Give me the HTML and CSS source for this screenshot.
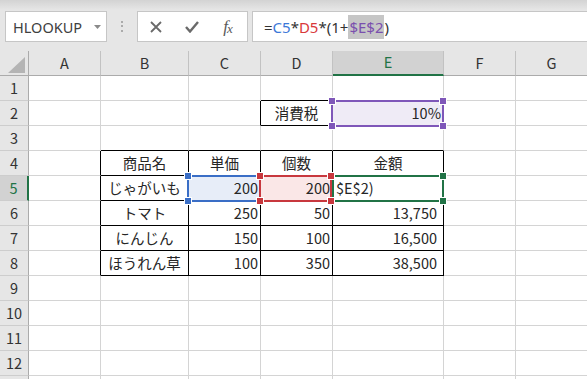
FILE: index.html
```html
<!DOCTYPE html>
<html lang="ja">
<head>
<meta charset="utf-8">
<title>Excel</title>
<link rel="stylesheet" href="styles.css">
</head>
<body>
<div class="toolbar">
  <div class="namebox">
    <span>HLOOKUP</span>
    <svg class="caret" width="7" height="4" viewBox="0 0 7 4"><polygon points="0,0 7,0 3.5,4" fill="#8a8a8a"/></svg>
  </div>
  <div class="grip"><div class="dots"></div></div>
  <div class="fbuttons">
    <div class="fb"><svg width="12" height="12" viewBox="0 0 12 12"><path d="M1 1 L11 11 M11 1 L1 11" stroke="#6a6a6a" stroke-width="1.8" fill="none"/></svg></div>
    <div class="fb"><svg width="14" height="12" viewBox="0 0 14 12"><path d="M1 6 L5 10.5 L13 1" stroke="#6a6a6a" stroke-width="2.4" fill="none"/></svg></div>
    <div class="fb fx"><span class="f">f</span><span class="x">x</span></div>
  </div>
  <div class="formula">
    <span class="ftext"><span class="k">=</span><span class="rb">C5</span><span class="k">*</span><span class="rr">D5</span><span class="k">*(1+</span><span class="hl">$E$2</span><span class="k">)</span></span>
  </div>
</div>

<div class="sheet">
  <!-- header -->
  <div class="corner"><svg width="28" height="24" viewBox="0 0 28 24"><polygon points="8,22 25,22 25,6" fill="#b4b4b4"/></svg></div>
  <div class="c ch">A</div><div class="c ch">B</div><div class="c ch">C</div><div class="c ch">D</div><div class="c ch sel">E</div><div class="c ch">F</div><div class="c ch">G</div>

  <!-- 1 -->
  <div class="c rh">1</div><div class="c"></div><div class="c"></div><div class="c"></div><div class="c bb"></div><div class="c"></div><div class="c"></div><div class="c"></div>
  <!-- 2 -->
  <div class="c rh">2</div><div class="c"></div><div class="c"></div><div class="c br"></div><div class="c br bb ctr">消費税</div><div class="c num f-purple">10%</div><div class="c"></div><div class="c"></div>
  <!-- 3 -->
  <div class="c rh">3</div><div class="c"></div><div class="c bb"></div><div class="c bb"></div><div class="c bb"></div><div class="c bb"></div><div class="c"></div><div class="c"></div>
  <!-- 4 -->
  <div class="c rh">4</div><div class="c br"></div><div class="c br bb ctr">商品名</div><div class="c br bb ctr">単価</div><div class="c br bb ctr">個数</div><div class="c br bb ctr">金額</div><div class="c"></div><div class="c"></div>
  <!-- 5 -->
  <div class="c rh sel">5</div><div class="c br"></div><div class="c br bb ctr">じゃがいも</div><div class="c br bb num f-blue">200</div><div class="c br bb num f-red">200</div><div class="c br bb edit">$E$2)</div><div class="c"></div><div class="c"></div>
  <!-- 6 -->
  <div class="c rh">6</div><div class="c br"></div><div class="c br bb ctr">トマト</div><div class="c br bb num">250</div><div class="c br bb num">50</div><div class="c br bb num pad">13,750</div><div class="c"></div><div class="c"></div>
  <!-- 7 -->
  <div class="c rh">7</div><div class="c br"></div><div class="c br bb ctr">にんじん</div><div class="c br bb num">150</div><div class="c br bb num">100</div><div class="c br bb num pad">16,500</div><div class="c"></div><div class="c"></div>
  <!-- 8 -->
  <div class="c rh">8</div><div class="c br"></div><div class="c br bb ctr">ほうれん草</div><div class="c br bb num">100</div><div class="c br bb num">350</div><div class="c br bb num pad">38,500</div><div class="c"></div><div class="c"></div>
  <!-- 9-12 -->
  <div class="c rh">9</div><div class="c"></div><div class="c"></div><div class="c"></div><div class="c"></div><div class="c"></div><div class="c"></div><div class="c"></div>
  <div class="c rh">10</div><div class="c"></div><div class="c"></div><div class="c"></div><div class="c"></div><div class="c"></div><div class="c"></div><div class="c"></div>
  <div class="c rh">11</div><div class="c"></div><div class="c"></div><div class="c"></div><div class="c"></div><div class="c"></div><div class="c"></div><div class="c"></div>
  <div class="c rh">12</div><div class="c"></div><div class="c"></div><div class="c"></div><div class="c"></div><div class="c"></div><div class="c"></div><div class="c"></div>
  <!-- sliver of next row -->
  <div class="c rh edge"></div><div class="c edge"></div><div class="c edge"></div><div class="c edge"></div><div class="c edge"></div><div class="c edge"></div><div class="c edge"></div><div class="c edge"></div>

  <!-- reference highlights (overlays) -->
  <div class="ref ref-e2"><i class="h tl"></i><i class="h tr"></i><i class="h bl"></i><i class="h brc"></i></div>
  <div class="ref ref-c5"><i class="h tl"></i><i class="h tr"></i><i class="h bl"></i><i class="h brc"></i></div>
  <div class="ref ref-d5"><i class="h tl"></i><i class="h tr"></i><i class="h bl"></i><i class="h brc"></i></div>
  <div class="ref ref-e5"><i class="h tr"></i><i class="h brc"></i></div>
</div>
</body>
</html>
```

FILE: styles.css
```css
* { box-sizing: border-box; }

body {
  margin: 0;
  width: 587px;
  height: 379px;
  overflow: hidden;
  background: #ffffff;
  font-family: "Noto Sans CJK JP", "Noto Sans", sans-serif;
}

/* ---------- toolbar ---------- */
.toolbar {
  height: 51px;
  display: flex;
  align-items: flex-start;
  padding-top: 11px;
  background: linear-gradient(#d3d3d3 0, #e6e6e6 10px, #e6e6e6 100%);
}

.namebox {
  margin-left: 5px;
  width: 102px;
  height: 31px;
  background: #fff;
  border: 1px solid #c6c6c6;
  display: flex;
  align-items: center;
  padding-left: 7px;
  font-family: "Noto Sans", sans-serif;
  font-size: 14.5px;
  color: #404040;
}

.caret {
  margin-left: auto;
  margin-right: 5px;
}

.grip {
  width: 30px;
  height: 31px;
  display: flex;
  justify-content: center;
  align-items: center;
}

.dots {
  width: 2px;
  height: 11px;
  background: repeating-linear-gradient(#ababab 0 2px, transparent 2px 4.5px);
}

.fbuttons {
  width: 111px;
  height: 31px;
  border: 1px solid #c6c6c6;
  background: #fff;
  display: flex;
  align-items: center;
}

.fb {
  width: 36px;
  display: flex;
  justify-content: center;
  align-items: center;
}

.fx {
  font-family: "Liberation Serif", serif;
  font-style: italic;
  color: #5a5a5a;
  font-size: 17px;
  line-height: 1;
}

.fx .x {
  font-size: 13px;
  margin-top: 4px;
  margin-left: -1px;
}

.formula {
  flex: 1;
  margin-left: 4px;
  height: 31px;
  border: 1px solid #c6c6c6;
  border-right: none;
  background: #fff;
  display: flex;
  align-items: center;
  padding-left: 11px;
  font-family: "Noto Sans", sans-serif;
  font-size: 15px;
  color: #333;
}

.ftext { line-height: 24px; }
.k { color: #333; }
.rb { color: #3c78d8; }
.rr { color: #d9383a; }
.hl {
  display: inline-block;
  background: #c6c6c6;
  color: #7a4fae;
  line-height: 24px;
  height: 24px;
  padding: 0 1px;
}

/* ---------- sheet ---------- */
.sheet {
  position: relative;
  display: grid;
  grid-template-columns: 29px 72px 88px 72px 72px 111px 72px 72px;
  grid-template-rows: repeat(13, 25px) 3px;
}

.c {
  border-right: 1px solid #d4d4d4;
  border-bottom: 1px solid #d4d4d4;
  display: flex;
  align-items: center;
  padding: 0 2px;
  font-size: 14.5px;
  line-height: 1;
  color: #262626;
  white-space: nowrap;
  overflow: hidden;
}

.edge { border-bottom: none; }

.corner {
  background: #e6e6e6;
  border-right: 1px solid #ababab;
  border-bottom: 1px solid #ababab;
}
.corner svg { display: block; }

.ch {
  background: #e6e6e6;
  border-right-color: #c2c2c2;
  border-bottom-color: #ababab;
  justify-content: center;
  color: #333;
}

.rh {
  background: #e6e6e6;
  border-right-color: #ababab;
  border-bottom-color: #cdcdcd;
  justify-content: center;
  color: #333;
  padding: 0;
}

.ch.sel {
  background: #d2d2d2;
  color: #217346;
  border-bottom: 2px solid #217346;
}

.rh.sel {
  background: #d2d2d2;
  color: #217346;
  border-right: 2px solid #217346;
}

.ctr { justify-content: center; }
.num { justify-content: flex-end; }
.pad { padding-right: 6px; }
.edit { padding-left: 3px; }

.br { border-right-color: #000; }
.bb { border-bottom-color: #000; }

.f-purple { background: #efebf6; }
.f-blue { background: #e7edf8; }
.f-red { background: #fae7e7; }

/* ---------- reference highlight overlays ---------- */
.ref {
  position: absolute;
  border: 2px solid currentColor;
}

.ref-e2 { color: #7f57b9; left: 331px; top: 49px; width: 113px; height: 27px; }
.ref-c5 { color: #3a6ec6; left: 187px; top: 124px; width: 74px; height: 27px; }
.ref-d5 { color: #c8383e; left: 259px; top: 124px; width: 73px; height: 27px; }
.ref-e5 { color: #217346; left: 332px; top: 124px; width: 112px; height: 27px; }

.h {
  position: absolute;
  width: 6px;
  height: 6px;
  background: currentColor;
  box-shadow: 0 0 0 1px #fff;
  z-index: 2;
}
.h.tl { left: -4px; top: -4px; }
.h.tr { right: -4px; top: -4px; }
.h.bl { left: -4px; bottom: -4px; }
.h.brc { right: -4px; bottom: -4px; }
```
